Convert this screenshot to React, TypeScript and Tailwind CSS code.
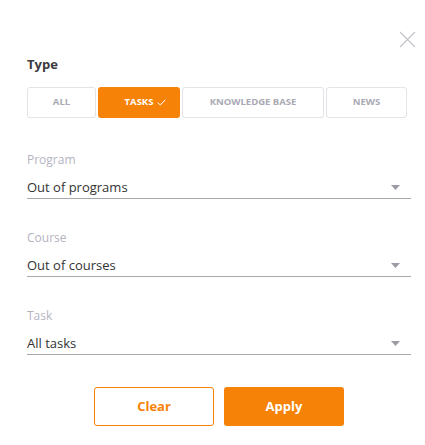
import React, { useState } from 'react';

const TYPES = [
  { key: 'all', label: 'ALL', w: 'w-[69px]' },
  { key: 'tasks', label: 'TASKS', w: 'w-[82px]' },
  { key: 'kb', label: 'KNOWLEDGE BASE', w: 'w-[142px]' },
  { key: 'news', label: 'NEWS', w: 'w-[81px]' },
];

const Select: React.FC<{ label: string; value: string; className?: string }> = ({ label, value, className }) => (
  <div className={className}>
    <div className="text-[12px] leading-[16px] text-[#b4b4bf]">{label}</div>
    <div className="mt-[10px] flex items-center justify-between border-b border-[#a9a9b0] pb-[2px] pr-[11px]">
      <span className="text-[13px] leading-[18px] text-[#333]">{value}</span>
      <svg width="9" height="5" viewBox="0 0 9 5">
        <path d="M0 0 L9 0 L4.5 5 Z" fill="#9b9ba6" />
      </svg>
    </div>
  </div>
);

const App: React.FC = () => {
  const [active, setActive] = useState('tasks');

  return (
    <div className="relative w-[425px] h-[445px] bg-white pl-[27px] pr-[14px] font-['Segoe_UI','Open_Sans','Noto_Sans',sans-serif]">
      <button className="absolute left-[399px] top-[31px] w-[17px] h-[17px]" aria-label="Close">
        <svg width="17" height="17" viewBox="0 0 17 17">
          <path d="M1 1 L16 16 M16 1 L1 16" stroke="#c2c2c9" strokeWidth="1.1" />
        </svg>
      </button>

      <div className="pt-[55px] text-[13px] leading-[18px] font-bold text-[#3a3a40]">Type</div>

      <div className="mt-[14px] flex gap-[2px]">
        {TYPES.map((t) => {
          const on = t.key === active;
          return (
            <button
              key={t.key}
              onClick={() => setActive(t.key)}
              className={
                on
                  ? `${t.w} h-[31px] rounded-[3px] bg-[#f78208] text-white text-[9.5px] font-bold flex items-center justify-center gap-[4px]`
                  : `${t.w} h-[31px] rounded-[3px] border border-[#e3e3e8] text-[#a9a9b4] text-[9.5px] font-bold flex items-center justify-center`
              }
            >
              {on && <span className="w-[9px]" />}
              {t.label}
              {on && (
                <svg width="9" height="7" viewBox="0 0 9 7">
                  <path d="M0.7 3.6 L3.3 6 L8.3 0.8" stroke="white" strokeWidth="1" fill="none" />
                </svg>
              )}
            </button>
          );
        })}
      </div>

      <Select label="Program" value="Out of programs" className="mt-[34px]" />
      <Select label="Course" value="Out of courses" className="mt-[31px]" />
      <Select label="Task" value="All tasks" className="mt-[31px]" />

      <div className="mt-[32px] flex gap-[10px] pl-[67px]">
        <button className="w-[120px] h-[39px] rounded-[3px] border border-[#f78208] text-[#f78208] text-[13px] font-bold">
          Clear
        </button>
        <button className="w-[120px] h-[39px] rounded-[3px] bg-[#f78208] text-white text-[13px] font-bold">Apply</button>
      </div>
    </div>
  );
};

export default App;
